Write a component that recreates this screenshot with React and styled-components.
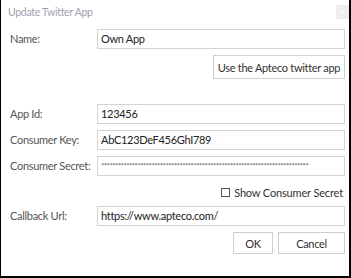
import React from "react";
import styled, { createGlobalStyle } from "styled-components";

const FONT = `Lato, "Open Sans", sans-serif`;

const Global = createGlobalStyle`
  html, body { margin: 0; padding: 0; background: #fff; }
  body { font-family: ${FONT}; }
  * { box-sizing: border-box; }
`;

const Window = styled.div`
  width: 351px;
  height: 278px;
  background: #fff;
  border-left: 1px solid #000;
  border-right: 2px solid #000;
  border-bottom: 2px solid #000;
  display: flex;
  flex-direction: column;
  font-family: ${FONT};
  font-size: 11px;
  letter-spacing: -0.3px;
`;

const TitleBar = styled.div`
  height: 29px;
  display: flex;
  justify-content: space-between;
  align-items: flex-start;
  padding: 5px 0 0 7px;
`;

const Title = styled.div`
  color: #a39db0;
  font-size: 10.5px;
  line-height: 14px;
`;

const Close = styled.div`
  width: 13px;
  height: 14px;
  background: #ededed;
  color: #fafafa;
  font-size: 9px;
  line-height: 14px;
  text-align: center;
`;

const Form = styled.div`
  display: flex;
  flex-direction: column;
  padding: 0 4px 0 9px;
`;

const Row = styled.div`
  display: grid;
  grid-template-columns: 87px 1fr;
  align-items: center;
  margin-top: ${(p) => p.$top || 0}px;
`;

const Label = styled.label`
  color: #555;
  font-size: 11px;
  line-height: 14px;
  white-space: nowrap;
`;

const Input = styled.div`
  height: 20px;
  border: 1px solid #d4d4d4;
  padding: 0 3px;
  color: ${(p) => (p.$secret ? "#666" : "#222")};
  font-size: ${(p) => (p.$secret ? "8px" : "11px")};
  line-height: 18px;
  white-space: nowrap;
  overflow: hidden;
  letter-spacing: ${(p) => (p.$secret ? "-0.6px" : "-0.3px")};
`;

const RightRow = styled.div`
  display: flex;
  justify-content: flex-end;
  align-items: center;
  gap: 5px;
  margin-top: ${(p) => p.$top || 0}px;
  padding-right: ${(p) => p.$pr || 0}px;
`;

const Button = styled.div`
  height: ${(p) => p.$h}px;
  width: ${(p) => p.$w}px;
  border: 1px solid #cfcfcf;
  background: #fff;
  color: #333;
  font-size: 11px;
  white-space: nowrap;
  display: flex;
  align-items: center;
  justify-content: center;
`;

const Check = styled.label`
  display: flex;
  align-items: center;
  gap: 4px;
  height: 14px;
  color: #333;
  font-size: 11px;
  letter-spacing: -0.15px;
  white-space: nowrap;
`;

const Box = styled.span`
  width: 9px;
  height: 9px;
  border: 1px solid #555;
  background: #fff;
`;

export default function App() {
  return (
    <>
      <Global />
      <Window>
        <TitleBar>
          <Title>Update Twitter App</Title>
          <Close>×</Close>
        </TitleBar>
        <Form>
          <Row>
            <Label>Name:</Label>
            <Input>Own App</Input>
          </Row>
          <RightRow $top={6}>
            <Button $w={132} $h={24}>Use the Apteco twitter app</Button>
          </RightRow>
          <Row $top={25}>
            <Label>App Id:</Label>
            <Input>123456</Input>
          </Row>
          <Row $top={6}>
            <Label>Consumer Key:</Label>
            <Input>AbC123DeF456GhI789</Input>
          </Row>
          <Row $top={6}>
            <Label>Consumer Secret:</Label>
            <Input $secret>{"*".repeat(74)}</Input>
          </Row>
          <RightRow $top={9} $pr={2}>
            <Check>
              <Box />
              Show Consumer Secret
            </Check>
          </RightRow>
          <Row $top={7}>
            <Label>Callback Url:</Label>
            <Input>https://www.apteco.com/</Input>
          </Row>
          <RightRow $top={6}>
            <Button $w={40} $h={22}>OK</Button>
            <Button $w={67} $h={22}>Cancel</Button>
          </RightRow>
        </Form>
      </Window>
    </>
  );
}
